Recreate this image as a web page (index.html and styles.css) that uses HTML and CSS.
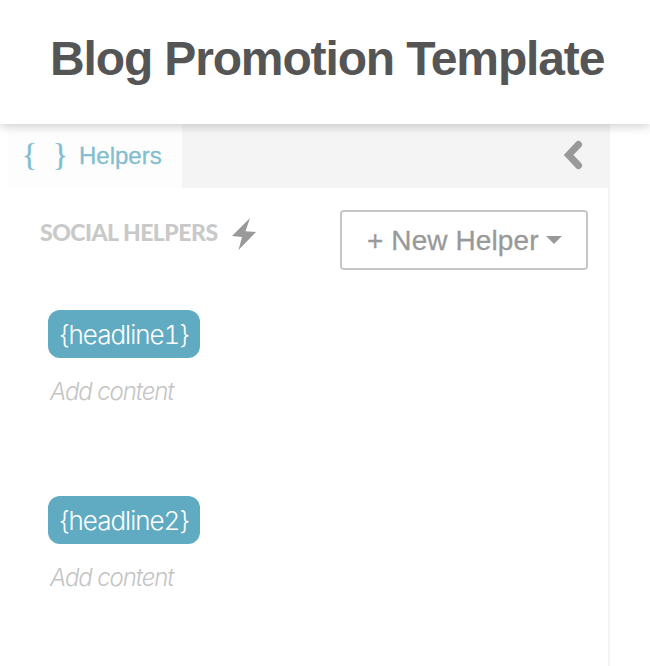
FILE: index.html
```html
<!DOCTYPE html>
<html>
<head>
    <title>Blog Promotion Template</title>
    <meta charset="UTF-8">
    <link rel="stylesheet" href="styles.css">
</head>
<body>
<header>
    <h1>Blog Promotion Template</h1>
</header>

<div class="panel">
    <div class="tabs">
        <div class="tab active">
            <span class="brace">{</span>
            <span class="brace">}</span>
            <span class="tab-name">Helpers</span>
        </div>
        <svg class="collapse" width="20" height="30" viewBox="0 0 20 30">
            <path d="M14.500 4.500 L4.500 15 L14.500 25.500"/>
        </svg>
    </div>

    <div class="toolbar">
        <h2>SOCIAL HELPERS</h2>
        <svg class="bolt" width="24" height="32" viewBox="0 0 24 32">
            <path d="M18 0 L0 18 L10 19 L6.500 32 L24 14 L13.500 13.300 Z"/>
        </svg>
        <button class="new-helper"><span>+ New Helper</span><i class="caret"></i></button>
    </div>

    <div class="helper">
        <div class="tag"><span>{headline1}</span></div>
        <p>Add content</p>
    </div>
    <div class="helper">
        <div class="tag"><span>{headline2}</span></div>
        <p>Add content</p>
    </div>
</div>
</body>
</html>
```
FILE: styles.css
```css
body {
    font-family: "Liberation Sans", Arial, sans-serif;
    background: white;
    margin: 0;
    height: 666px;
    overflow: hidden;
    display: flex;
    flex-direction: column;
}

header {
    position: relative;
    flex: none;
    box-sizing: border-box;
    height: 124px;
    padding: 31px 0 0 50px;
    background: white;
    box-shadow: 0 2px 10px rgba(0, 0, 0, 0.2);
}

h1 {
    margin: 0;
    font-size: 48px;
    line-height: 56px;
    letter-spacing: -1.14px;
    color: #555;
    white-space: nowrap;
}

.panel {
    flex: 1;
    width: 600px;
    margin-left: 8px;
    border-right: 2px solid #f4f4f4;
}

.tabs {
    display: flex;
    justify-content: space-between;
    height: 64px;
    margin-right: -2px;
    background: #f4f4f4;
}

.tab {
    display: flex;
    box-sizing: border-box;
    width: 174px;
    padding: 16px 0 0 14px;
    line-height: 32px;
    color: #82bdd0;
}

.tab.active {
    background: #fdfdfd;
}

.brace {
    width: 31px;
    font-family: "Liberation Serif", serif;
    font-size: 31px;
    line-height: 31px;
    -webkit-text-stroke: 0.4px;
}

.tab-name {
    font-size: 24px;
    -webkit-text-stroke: 0.3px;
    margin-left: -5px;
}

.collapse {
    margin: 16px 26px 0 0;
    fill: none;
    stroke: #999;
    stroke-width: 7;
    stroke-linecap: round;
}

.toolbar {
    display: flex;
    height: 122px;
    padding: 22px 20px 0 32px;
    box-sizing: border-box;
}

h2 {
    margin: 7px 14px 0 0;
    width: 178px;
    font-family: Lato, sans-serif;
    font-size: 23px;
    font-weight: 900;
    line-height: 30px;
    letter-spacing: -0.5px;
    color: #c9c9c9;
    white-space: nowrap;
}

.bolt {
    margin-top: 8px;
    fill: #999;
}

.new-helper {
    display: flex;
    align-items: center;
    justify-content: space-between;
    box-sizing: border-box;
    width: 248px;
    height: 60px;
    margin-left: auto;
    padding: 2px 24px 0 25px;
    border: 2px solid #c6c6c6;
    border-radius: 4px;
    background: white;
    color: #999;
    font-family: inherit;
    font-size: 28px;
    letter-spacing: 0.1px;
    white-space: nowrap;
    -webkit-text-stroke: 0.3px;
}

.caret {
    margin-top: -2px;
    border-top: 8px solid #999;
    border-left: 8px solid transparent;
    border-right: 8px solid transparent;
}

.helper {
    height: 186px;
    padding-left: 40px;
}

.tag {
    display: flex;
    justify-content: center;
    width: 152px;
    height: 48px;
    border-radius: 12px;
    background: #60abc1;
    color: white;
    font-family: Inter, sans-serif;
    font-size: 26px;
    font-weight: 300;
    font-variant-numeric: tabular-nums;
    letter-spacing: -1px;
    line-height: 49px;
}

.helper p {
    margin: 18px 0 0 2px;
    color: #c4c4c4;
    font-family: Inter, sans-serif;
    font-size: 24px;
    font-weight: 300;
    font-style: italic;
    letter-spacing: -1.1px;
    line-height: 32px;
}
```
